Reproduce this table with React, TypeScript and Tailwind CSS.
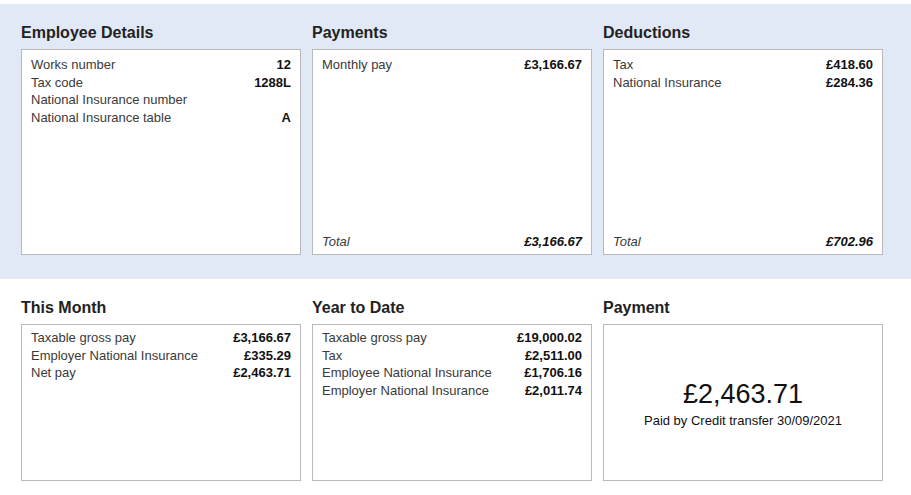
import React from "react";

type Row = { label: string; value: string };

const font = { fontFamily: '"Liberation Sans", Arial, Helvetica, sans-serif' };

function Rows({ rows }: { rows: Row[] }) {
  return (
    <div>
      {rows.map((r) => (
        <div key={r.label} className="flex justify-between leading-[17.7px]">
          <span className="text-[#3a3a3a]">{r.label}</span>
          <span className="font-bold text-[#111]">{r.value}</span>
        </div>
      ))}
    </div>
  );
}

function Section({
  title,
  children,
  className,
}: {
  title: string;
  children: React.ReactNode;
  className: string;
}) {
  return (
    <div className="flex flex-col">
      <h2 className="mb-[7px] text-[16px] font-bold leading-[18px] text-[#222]">{title}</h2>
      <div className={`flex flex-col border border-[#b9b9b9] bg-white ${className}`}>{children}</div>
    </div>
  );
}

function Total({ value }: { value: string }) {
  return (
    <div className="mt-auto flex justify-between italic leading-[17.7px]">
      <span className="text-[#3a3a3a]">Total</span>
      <span className="font-bold text-[#111]">{value}</span>
    </div>
  );
}

export default function App() {
  return (
    <div className="min-h-[495px] w-[911px] bg-white pt-[4px] text-[13px]" style={font}>
      <div className="bg-[#e2e9f6] pb-[24px] pl-[21px] pt-[20px]">
        <div className="grid grid-cols-[280px_280px_280px] gap-x-[11px]">
          <Section title="Employee Details" className="h-[206px] px-[9px] pb-[3px] pt-[6px]">
            <Rows
              rows={[
                { label: "Works number", value: "12" },
                { label: "Tax code", value: "1288L" },
                { label: "National Insurance number", value: "" },
                { label: "National Insurance table", value: "A" },
              ]}
            />
          </Section>
          <Section title="Payments" className="h-[206px] px-[9px] pb-[3px] pt-[6px]">
            <Rows rows={[{ label: "Monthly pay", value: "£3,166.67" }]} />
            <Total value="£3,166.67" />
          </Section>
          <Section title="Deductions" className="h-[206px] px-[9px] pb-[3px] pt-[6px]">
            <Rows
              rows={[
                { label: "Tax", value: "£418.60" },
                { label: "National Insurance", value: "£284.36" },
              ]}
            />
            <Total value="£702.96" />
          </Section>
        </div>
      </div>
      <div className="pl-[21px] pt-[20px]">
        <div className="grid grid-cols-[280px_280px_280px] gap-x-[11px]">
          <Section title="This Month" className="h-[157px] px-[9px] pb-[3px] pt-[4px]">
            <Rows
              rows={[
                { label: "Taxable gross pay", value: "£3,166.67" },
                { label: "Employer National Insurance", value: "£335.29" },
                { label: "Net pay", value: "£2,463.71" },
              ]}
            />
          </Section>
          <Section title="Year to Date" className="h-[157px] px-[9px] pb-[3px] pt-[4px]">
            <Rows
              rows={[
                { label: "Taxable gross pay", value: "£19,000.02" },
                { label: "Tax", value: "£2,511.00" },
                { label: "Employee National Insurance", value: "£1,706.16" },
                { label: "Employer National Insurance", value: "£2,011.74" },
              ]}
            />
          </Section>
          <Section title="Payment" className="h-[157px] items-center justify-center">
            <div className="text-[27px] leading-[34px] text-[#111]">£2,463.71</div>
            <div className="mt-[2px] text-[13px] leading-[16px] text-[#111]">Paid by Credit transfer 30/09/2021</div>
          </Section>
        </div>
      </div>
    </div>
  );
}
